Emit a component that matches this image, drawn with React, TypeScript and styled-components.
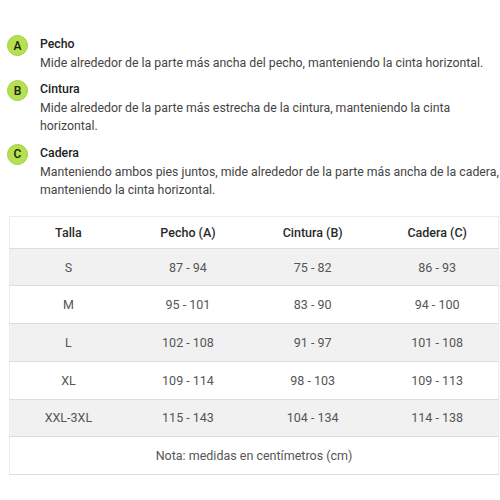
import React from "react";
import styled, { createGlobalStyle } from "styled-components";

const GlobalStyle = createGlobalStyle`
  body {
    margin: 0;
    background: #fff;
    font-family: Roboto, "Liberation Sans", sans-serif;
  }
`;

const guide = [
  { letter: "A", title: "Pecho", text: "Mide alrededor de la parte más ancha del pecho, manteniendo la cinta horizontal." },
  { letter: "B", title: "Cintura", text: "Mide alrededor de la parte más estrecha de la cintura, manteniendo la cinta horizontal." },
  { letter: "C", title: "Cadera", text: "Manteniendo ambos pies juntos, mide alrededor de la parte más ancha de la cadera, manteniendo la cinta horizontal." },
];

const rows = [
  ["S", "87 - 94", "75 - 82", "86 - 93"],
  ["M", "95 - 101", "83 - 90", "94 - 100"],
  ["L", "102 - 108", "91 - 97", "101 - 108"],
  ["XL", "109 - 114", "98 - 103", "109 - 113"],
  ["XXL-3XL", "115 - 143", "104 - 134", "114 - 138"],
];

const colWidths = ["24%", "25%", "26%", "25%"];

export default function App() {
  return (
    <Page>
      <GlobalStyle />
      <GuideList>
        {guide.map((g) => (
          <GuideItem key={g.letter}>
            <Badge>{g.letter}</Badge>
            <GuideText>
              <GuideTitle>{g.title}</GuideTitle>
              <GuideDesc>{g.text}</GuideDesc>
            </GuideText>
          </GuideItem>
        ))}
      </GuideList>
      <SizeTable>
        <colgroup>
          {colWidths.map((w, i) => (
            <col key={i} style={{ width: w }} />
          ))}
        </colgroup>
        <thead>
          <tr>
            <HeadCell>Talla</HeadCell>
            <HeadCell>Pecho (A)</HeadCell>
            <HeadCell>Cintura (B)</HeadCell>
            <HeadCell>Cadera (C)</HeadCell>
          </tr>
        </thead>
        <tbody>
          {rows.map((r, i) => (
            <Row key={r[0]} $shaded={i % 2 === 0}>
              {r.map((c) => (
                <Cell key={c}>{c}</Cell>
              ))}
            </Row>
          ))}
          <Row $shaded={false}>
            <Cell colSpan={4}>Nota: medidas en centímetros (cm)</Cell>
          </Row>
        </tbody>
      </SizeTable>
    </Page>
  );
}

const Page = styled.div`
  width: 500px;
  padding: 35px 0 0;
`;

const GuideList = styled.div`
  display: flex;
  flex-direction: column;
  gap: 8px;
  padding: 0 0 0 7px;
`;

const GuideItem = styled.div`
  display: flex;
  align-items: flex-start;
  gap: 12px;
`;

const Badge = styled.div`
  flex: none;
  width: 19px;
  height: 19px;
  border-radius: 50%;
  background: #b5e04f;
  border: 1px solid #a0cf40;
  display: flex;
  align-items: center;
  justify-content: center;
  font-size: 12px;
  font-weight: 500;
  color: #1a200e;
`;

const GuideText = styled.div`
  display: flex;
  flex-direction: column;
  font-size: 12.3px;
  line-height: 18.6px;
`;

const GuideTitle = styled.span`
  font-weight: 500;
  color: #222;
`;

const GuideDesc = styled.span`
  color: #444;
`;

const SizeTable = styled.table`
  margin: 16px 0 0 9px;
  width: 490px;
  border-collapse: collapse;
  table-layout: fixed;
  border: 1px solid #ececec;
  font-size: 12.5px;
`;

const HeadCell = styled.th`
  height: 31px;
  padding: 0;
  font-weight: 500;
  color: #2a2a2a;
  text-align: center;
  border-bottom: 1px solid #dcdcdc;
`;

const Row = styled.tr<{ $shaded: boolean }>`
  background: ${(p) => (p.$shaded ? "#f1f1f1" : "#fff")};
  border-bottom: 1px solid #dddddd;
`;

const Cell = styled.td`
  height: 36.7px;
  padding: 0;
  text-align: center;
  color: #555;
`;
